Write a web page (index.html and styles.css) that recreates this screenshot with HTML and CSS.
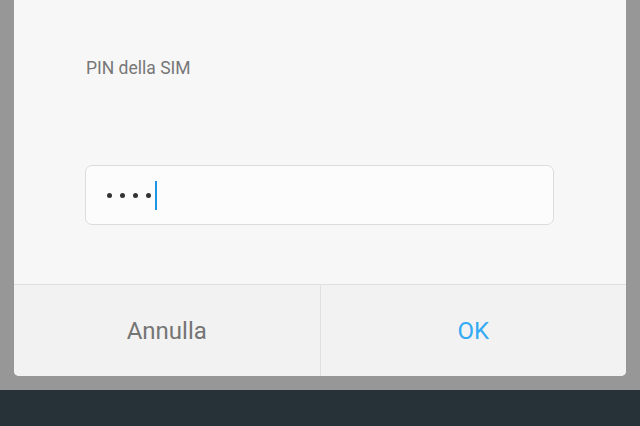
FILE: index.html
```html
<!DOCTYPE html>
<html lang="it">
<head>
    <meta charset="UTF-8">
    <meta name="viewport" content="width=device-width, initial-scale=1.0">
    <title>PIN della SIM</title>
    <link rel="stylesheet" href="styles.css">
</head>
<body>

    <div class="dialog">
        <div class="dialog-body">
            <p class="label">PIN della SIM</p>

            <!-- PIN field with masked digits -->
            <div class="pin-field">
                <span class="dot"></span>
                <span class="dot"></span>
                <span class="dot"></span>
                <span class="dot"></span>
                <span class="cursor"></span>
            </div>
        </div>

        <div class="dialog-buttons">
            <button class="button cancel" type="button">Annulla</button>
            <button class="button ok" type="button">OK</button>
        </div>
    </div>

    <div class="nav-bar"></div>

</body>
</html>
```

FILE: styles.css
```css
body {
    font-family: Roboto, "Noto Sans", sans-serif;
    margin: 0;
    padding: 0;
    background-color: #979797;
    height: 426px;
    overflow: hidden;
}
.dialog {
    margin: 0 14px;
    background-color: #f7f7f7;
    border-radius: 0 0 5px 5px;
    overflow: hidden;
}
.dialog-body {
    padding: 58px 72px 59px 71px;
}
.label {
    margin: 0 0 0 1px;
    font-size: 17.5px;
    line-height: 20px;
    color: #777;
}
.pin-field {
    margin-top: 87px;
    height: 58px;
    border: 1px solid #dcdcdc;
    border-radius: 7px;
    background-color: #fcfcfc;
    display: flex;
    align-items: center;
    padding-left: 21px;
    gap: 8px;
}
.dot {
    width: 5px;
    height: 5px;
    border-radius: 50%;
    background-color: #333;
}
.cursor {
    width: 2px;
    height: 29px;
    margin-left: -4px;
    background-color: #1e96e6;
}
.dialog-buttons {
    display: flex;
    border-top: 1px solid #e0e0e0;
    background-color: #f2f2f2;
}
.button {
    flex: 1;
    height: 91px;
    border: none;
    background: none;
    font-family: Roboto, "Noto Sans", sans-serif;
    font-size: 24px;
    padding: 0;
    cursor: pointer;
}
.cancel {
    color: #757575;
    border-right: 1px solid #e0e0e0;
}
.ok {
    color: #33aaf5;
}
.nav-bar {
    margin-top: 14px;
    height: 36px;
    background-color: #263238;
}
```
